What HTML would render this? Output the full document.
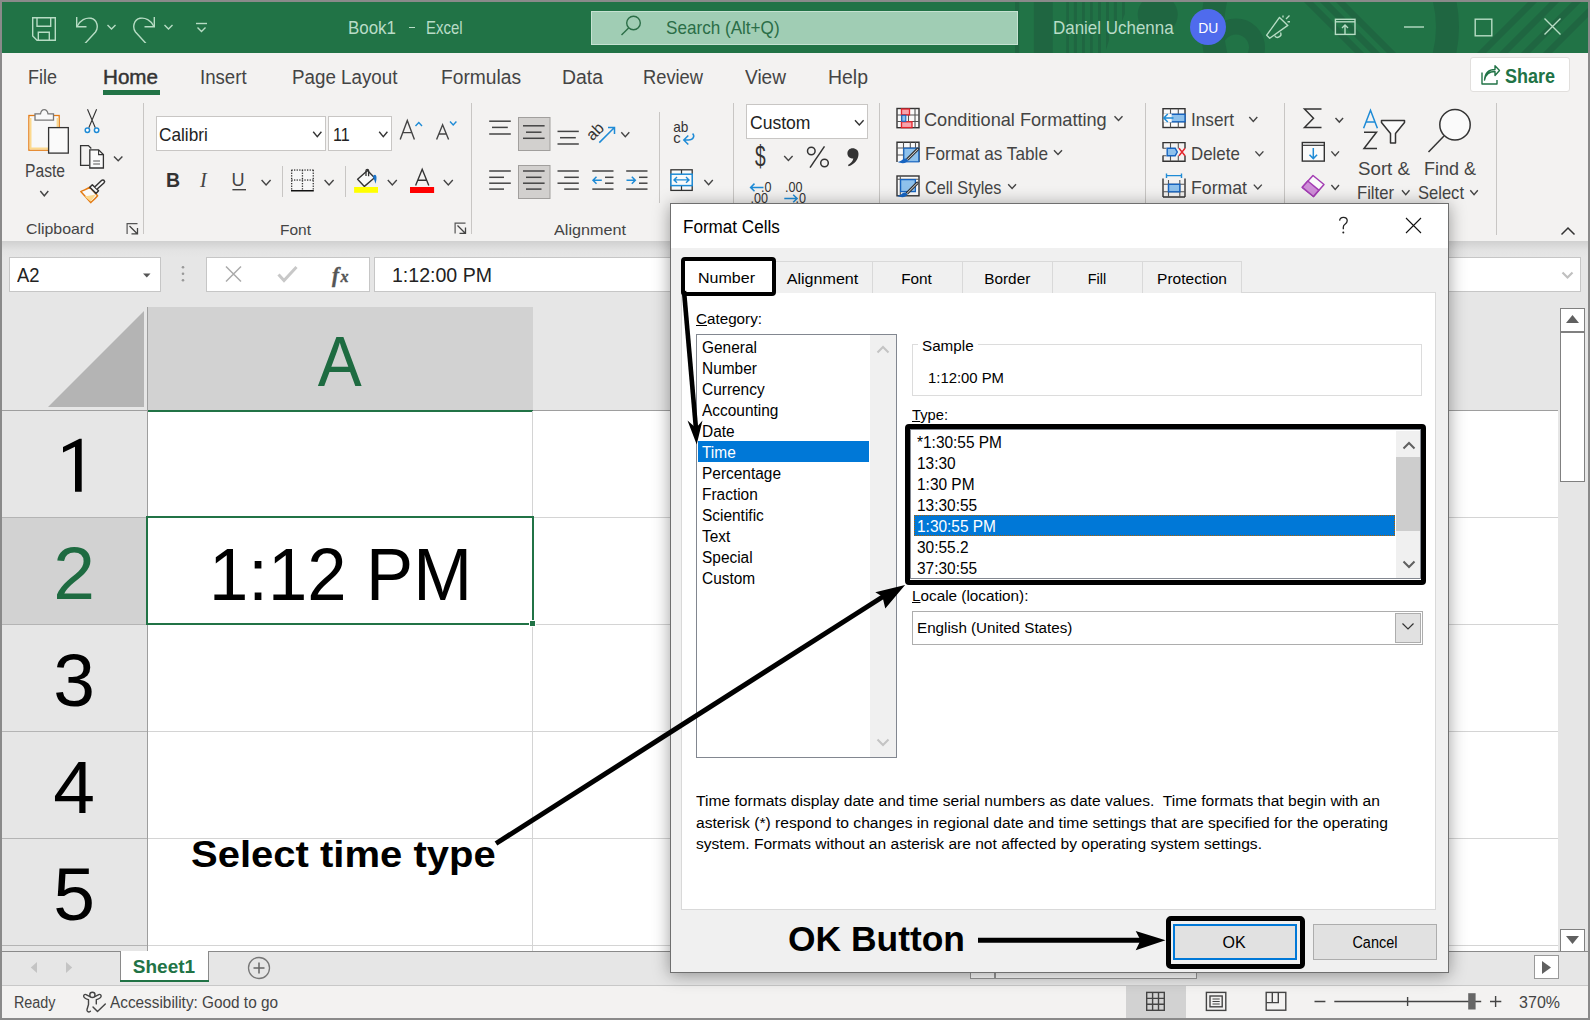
<!DOCTYPE html><html><head><meta charset="utf-8"><style>
*{margin:0;padding:0;box-sizing:border-box}
html,body{width:1590px;height:1020px;overflow:hidden;background:#8a8a8a}
body{position:relative;font-family:"Liberation Sans",sans-serif}
.a{position:absolute;display:block}
.t{position:absolute;white-space:nowrap;line-height:1}
.t span{display:inline-block}
.sl{transform-origin:0 50%}.sc{transform-origin:50% 50%}.sr{transform-origin:100% 50%}
</style></head><body>
<div class="a" style="left:2px;top:2px;width:1586px;height:1016px;background:#f3f2f1"></div>
<div class="a" style="left:2px;top:2px;width:1586px;height:51px;background:#217346;overflow:hidden"></div>
<svg class="a" style="left:1010px;top:2px;" width="578" height="51" viewBox="1010 2 578 51">
<g fill="#1f6641"><rect x="1015" y="0" width="4.2000000000000455" height="56"/><rect x="1033.9" y="0" width="18.799999999999955" height="56"/><rect x="1066.3" y="0" width="2.7000000000000455" height="56"/><rect x="1073.9" y="0" width="3.0" height="56"/><rect x="1082" y="0" width="2.7999999999999545" height="56"/><rect x="1090" y="0" width="2.7000000000000455" height="56"/><rect x="1098" y="0" width="3" height="56"/><path d="M1106 0H1109V40L1106 50Z"/><path d="M1113.9 0H1116.9V28L1113.9 36Z"/><path d="M1122 0H1124.8V14L1122 21Z"/>
<circle cx="1157.7" cy="14.6" r="20"/>
<path d="M1302 0 L1311 0 L1367 56 L1358 56Z"/><path d="M1318 0 L1327 0 L1383 56 L1374 56Z"/><path d="M1334 0 L1343 0 L1399 56 L1390 56Z"/><path d="M1474 56 L1483 56 L1539 0 L1530 0Z"/><path d="M1496 56 L1505 56 L1561 0 L1552 0Z"/><path d="M1518 56 L1527 56 L1583 0 L1574 0Z"/><path d="M1540 56 L1549 56 L1605 0 L1596 0Z"/>
</g>
<g fill="none" stroke="#1f6641">
<circle cx="1236" cy="47.4" r="21" stroke-width="16"/>
<circle cx="1330" cy="27" r="117.5" stroke-width="23"/>
</g></svg>
<div class="t" style="left:347.5px;top:18.00px;font-size:19px;color:#b9dcc7;font-weight:400;"><span id="t1" class="sl" style="transform:scaleX(0.8910)">Book1</span></div>
<div class="a" style="left:409px;top:27px;width:5.5px;height:1.4px;background:#b9dcc7"></div>
<div class="t" style="left:426px;top:18.00px;font-size:19px;color:#b9dcc7;font-weight:400;"><span id="t2" class="sl" style="transform:scaleX(0.7876)">Excel</span></div>
<div class="a" style="left:591px;top:10.5px;width:427px;height:34px;background:#a0cdb4;border:1px solid #c6e2d2"></div>
<div class="t" style="left:665.5px;top:18.00px;font-size:19px;color:#2b6e47;font-weight:400;"><span id="t3" class="sl" style="transform:scaleX(0.9002)">Search (Alt+Q)</span></div>
<div class="t" style="left:1052.9px;top:18.00px;font-size:19px;color:#b9dcc7;font-weight:400;"><span id="t4" class="sl" style="transform:scaleX(0.8920)">Daniel Uchenna</span></div>
<div class="a" style="left:1190px;top:9px;width:36px;height:36px;border-radius:50%;background:#4f6bed"></div>
<div class="t" style="left:808px;width:800px;text-align:center;top:20.00px;font-size:15.5px;color:#fff;font-weight:400;"><span id="t5" class="sc" style="transform:scaleX(0.8932)">DU</span></div>
<div class="t" style="left:28px;top:67.00px;font-size:20px;color:#444;font-weight:400;"><span id="t6" class="sl" style="transform:scaleX(0.8997)">File</span></div>
<div class="t" style="left:200.4px;top:67.00px;font-size:20px;color:#444;font-weight:400;"><span id="t7" class="sl" style="transform:scaleX(0.9314)">Insert</span></div>
<div class="t" style="left:292px;top:67.00px;font-size:20px;color:#444;font-weight:400;"><span id="t8" class="sl" style="transform:scaleX(0.9392)">Page Layout</span></div>
<div class="t" style="left:441px;top:67.00px;font-size:20px;color:#444;font-weight:400;"><span id="t9" class="sl" style="transform:scaleX(0.9597)">Formulas</span></div>
<div class="t" style="left:562px;top:67.00px;font-size:20px;color:#444;font-weight:400;"><span id="t10" class="sl" style="transform:scaleX(0.9704)">Data</span></div>
<div class="t" style="left:643px;top:67.00px;font-size:20px;color:#444;font-weight:400;"><span id="t11" class="sl" style="transform:scaleX(0.9149)">Review</span></div>
<div class="t" style="left:745px;top:67.00px;font-size:20px;color:#444;font-weight:400;"><span id="t12" class="sl" style="transform:scaleX(0.9535)">View</span></div>
<div class="t" style="left:828px;top:67.00px;font-size:20px;color:#444;font-weight:400;"><span id="t13" class="sl" style="transform:scaleX(0.9723)">Help</span></div>
<div class="t" style="left:103px;top:67.00px;font-size:20px;color:#333;font-weight:400;-webkit-text-stroke:0.45px #333"><span id="t14" class="sl" style="transform:scaleX(1.0307)">Home</span></div>
<div class="a" style="left:103px;top:90px;width:57px;height:5px;background:#217346"></div>
<div class="a" style="left:1470px;top:57px;width:100px;height:35px;background:#fff;border:1px solid #e1dfdd;border-radius:3px"></div>
<div class="t" style="left:1505px;top:66.00px;font-size:20px;color:#217346;font-weight:700;"><span id="t15" class="sl" style="transform:scaleX(0.8994)">Share</span></div>
<svg class="a" style="left:30px;top:15px;" width="28" height="28" viewBox="0 0 28 28"><g fill="none" stroke="#b7dcc4" stroke-width="1.4"><path d="M2.7 2.7H25.3V25.3H7L2.7 21Z"/><path d="M7 2.7V11.3H20.7V2.7"/><path d="M8.3 25.3V17.3H19.3V25.3"/></g></svg>
<svg class="a" style="left:74px;top:15px;" width="28" height="28" viewBox="0 0 28 28"><g fill="none" stroke="#b7dcc4" stroke-width="1.4" stroke-linejoin="miter"><path d="M2.7 2V11.8H12.5"/><path d="M3 11.5 C6 5 12 2.3 17 3.3 C23 4.5 25 12 21.5 17 L11 28.5"/></g></svg>
<svg class="a" style="left:105px;top:22px;" width="14" height="10" viewBox="0 0 14 10"><path d="M2.5 3L6.5 7L10.5 3" fill="none" stroke="#b7dcc4" stroke-width="1.4"/></svg>
<svg class="a" style="left:131px;top:15px;" width="28" height="28" viewBox="0 0 28 28"><g fill="none" stroke="#b7dcc4" stroke-width="1.4" transform="translate(26 0) scale(-1 1)"><path d="M2.7 2V11.8H12.5"/><path d="M3 11.5 C6 5 12 2.3 17 3.3 C23 4.5 25 12 21.5 17 L11 28.5"/></g></svg>
<svg class="a" style="left:162px;top:22px;" width="14" height="10" viewBox="0 0 14 10"><path d="M2.5 3L6.5 7L10.5 3" fill="none" stroke="#b7dcc4" stroke-width="1.4"/></svg>
<svg class="a" style="left:194px;top:20px;" width="16" height="16" viewBox="0 0 16 16"><g fill="none" stroke="#b7dcc4" stroke-width="1.4"><path d="M2 3.5H13"/><path d="M3.5 7.5L7.5 11.5L11.5 7.5"/></g></svg>
<svg class="a" style="left:1262px;top:12px;" width="32" height="30" viewBox="0 0 32 30"><g fill="none" stroke="#b7dcc4" stroke-width="1.4" stroke-linejoin="round"><path d="M4.7 23.2L17.5 5.4L25.8 13.4L7.7 26.2Z"/><path d="M12.6 23.5A3 3 0 0 0 18.5 20.5"/><path d="M21 3.5V5.5M24 7L27.5 3.5M25.5 9.8H28"/></g></svg>
<svg class="a" style="left:1332px;top:16px;" width="26" height="22" viewBox="0 0 26 22"><g fill="none" stroke="#b7dcc4" stroke-width="1.4"><rect x="3.4" y="3.3" width="19.6" height="15.1"/><path d="M3.4 5.8H23"/><path d="M13 18.5V9M10 12L13 9L16 12"/></g></svg>
<svg class="a" style="left:1400px;top:20px;" width="28" height="14" viewBox="0 0 28 14"><path d="M4 7H24" fill="none" stroke="#b7dcc4" stroke-width="1.4"/></svg>
<svg class="a" style="left:1470px;top:14px;" width="28" height="28" viewBox="0 0 28 28"><rect x="5.2" y="5.2" width="16.6" height="16.6" fill="none" stroke="#b7dcc4" stroke-width="1.4"/></svg>
<svg class="a" style="left:1540px;top:14px;" width="26" height="26" viewBox="0 0 26 26"><path d="M4.5 4.5L20.5 20.5M20.5 4.5L4.5 20.5" fill="none" stroke="#b7dcc4" stroke-width="1.4"/></svg>
<svg class="a" style="left:616px;top:13px;" width="30" height="28" viewBox="0 0 30 28"><g fill="none" stroke="#2b6e47" stroke-width="1.4"><circle cx="17.5" cy="10" r="6.8"/><path d="M12.6 14.9L5.5 22"/></g></svg>
<div class="a" style="left:2px;top:241px;width:1586px;height:16px;background:linear-gradient(#d0d0d0,#e3e3e3 60%,#e6e6e6)"></div>
<div class="t" style="left:26px;top:221.00px;font-size:15px;color:#444;font-weight:400;"><span id="t16" class="sl" style="transform:scaleX(1.0589)">Clipboard</span></div>
<div class="t" style="left:280px;top:222.00px;font-size:15px;color:#444;font-weight:400;"><span id="t17" class="sl" style="transform:scaleX(1.0328)">Font</span></div>
<div class="t" style="left:554px;top:222.00px;font-size:15px;color:#444;font-weight:400;"><span id="t18" class="sl" style="transform:scaleX(1.0794)">Alignment</span></div>
<div class="a" style="left:143px;top:103px;width:1px;height:131px;background:#c8c6c4"></div>
<div class="a" style="left:471px;top:103px;width:1px;height:131px;background:#c8c6c4"></div>
<div class="a" style="left:733px;top:103px;width:1px;height:131px;background:#c8c6c4"></div>
<div class="a" style="left:879px;top:103px;width:1px;height:131px;background:#c8c6c4"></div>
<div class="a" style="left:1145px;top:103px;width:1px;height:131px;background:#c8c6c4"></div>
<div class="a" style="left:1284px;top:103px;width:1px;height:131px;background:#c8c6c4"></div>
<div class="a" style="left:1496px;top:103px;width:1px;height:132px;background:#c8c6c4"></div>
<div class="a" style="left:282px;top:166px;width:1px;height:31px;background:#c8c6c4"></div>
<div class="a" style="left:345px;top:166px;width:1px;height:31px;background:#c8c6c4"></div>
<div class="a" style="left:659px;top:112px;width:1px;height:91px;background:#c8c6c4"></div>
<div class="t" style="left:25px;top:162.00px;font-size:18px;color:#444;font-weight:400;"><span id="t19" class="sl" style="transform:scaleX(0.8690)">Paste</span></div>
<div class="a" style="left:156px;top:116px;width:170px;height:35px;background:#fff;border:1px solid #c8c6c4"></div>
<div class="t" style="left:159.2px;top:125.00px;font-size:19px;color:#222;font-weight:400;"><span id="t20" class="sl" style="transform:scaleX(0.9061)">Calibri</span></div>
<div class="a" style="left:328px;top:116px;width:64px;height:35px;background:#fff;border:1px solid #c8c6c4"></div>
<div class="t" style="left:332.5px;top:125.00px;font-size:19px;color:#222;font-weight:400;"><span id="t21" class="sl" style="transform:scaleX(0.8462)">11</span></div>
<div class="a" style="left:746px;top:104px;width:122px;height:35px;background:#fff;border:1px solid #c8c6c4"></div>
<div class="t" style="left:749.5px;top:114.00px;font-size:18px;color:#222;font-weight:400;"><span id="t22" class="sl" style="transform:scaleX(0.9756)">Custom</span></div>
<div class="t" style="left:924px;top:110.00px;font-size:19px;color:#444;font-weight:400;"><span id="t23" class="sl" style="transform:scaleX(0.9558)">Conditional Formatting</span></div>
<div class="t" style="left:925px;top:144.00px;font-size:19px;color:#444;font-weight:400;"><span id="t24" class="sl" style="transform:scaleX(0.9051)">Format as Table</span></div>
<div class="t" style="left:925px;top:178.00px;font-size:19px;color:#444;font-weight:400;"><span id="t25" class="sl" style="transform:scaleX(0.8513)">Cell Styles</span></div>
<div class="t" style="left:1191px;top:110.00px;font-size:19px;color:#444;font-weight:400;"><span id="t26" class="sl" style="transform:scaleX(0.9047)">Insert</span></div>
<div class="t" style="left:1191px;top:144.00px;font-size:19px;color:#444;font-weight:400;"><span id="t27" class="sl" style="transform:scaleX(0.8885)">Delete</span></div>
<div class="t" style="left:1191px;top:178.00px;font-size:19px;color:#444;font-weight:400;"><span id="t28" class="sl" style="transform:scaleX(0.9304)">Format</span></div>
<div class="t" style="left:1358px;top:159.00px;font-size:19px;color:#444;font-weight:400;"><span id="t29" class="sl" style="transform:scaleX(0.9846)">Sort &amp;</span></div>
<div class="t" style="left:1357px;top:183.00px;font-size:19px;color:#444;font-weight:400;"><span id="t30" class="sl" style="transform:scaleX(0.8761)">Filter</span></div>
<div class="t" style="left:1424px;top:159.00px;font-size:19px;color:#444;font-weight:400;"><span id="t31" class="sl" style="transform:scaleX(0.9468)">Find &amp;</span></div>
<div class="t" style="left:1418px;top:183.00px;font-size:19px;color:#444;font-weight:400;"><span id="t32" class="sl" style="transform:scaleX(0.8710)">Select</span></div>
<svg class="a" style="left:20px;top:104px;" width="115" height="135" viewBox="20 104 115 135">
<rect x="28.9" y="115.5" width="30.3" height="34.7" fill="#f8f8f8" stroke="#e37b14" stroke-width="1.3"/>
<path d="M30.5 118V148.5H48M57.6 118V127" fill="none" stroke="#fcd98e" stroke-width="2"/>
<path d="M35 113.9H40.5C41 111 42.5 109.6 44.2 109.6C46 109.6 47.5 111 48 113.9H53.5V120.2H35Z" fill="#f8f8f8" stroke="#777" stroke-width="1.3"/>
<rect x="48.6" y="127.6" width="19.7" height="25.5" fill="#fafafa" stroke="#333" stroke-width="1.3"/>
<path d="M40.3 191L44.3 195.8L48.3 191" fill="none" stroke="#444" stroke-width="1.4"/>
<path d="M87.5 109.2L95.3 127.8M96.6 109.2L88.8 127.8" stroke="#333" stroke-width="1.1"/>
<circle cx="87.4" cy="130.2" r="2.2" fill="#fff" stroke="#1e8bd6" stroke-width="1.5"/>
<circle cx="96.6" cy="130.2" r="2.2" fill="#fff" stroke="#1e8bd6" stroke-width="1.5"/>
<path d="M89.4 165.3H80.6V145.6H88.4L91.3 148.5" fill="none" stroke="#333" stroke-width="1.3"/>
<path d="M89.8 168H103.4V154.6L98.6 149.9H89.8Z" fill="#fafafa" stroke="#333" stroke-width="1.3"/>
<path d="M98.6 149.9V154.6H103.4" fill="none" stroke="#333" stroke-width="1.1"/>
<path d="M93.2 161H100M93.2 164H100" stroke="#555" stroke-width="1"/>
<path d="M114 156.5L118.2 160.8L122.4 156.5" fill="none" stroke="#444" stroke-width="1.4"/>
<path d="M80.8 191.6C84 190 87 189.2 89.8 187.2L97.6 195.8C95.5 198.5 93 200.5 90.7 202.6Z" fill="#fafafa" stroke="#e37b14" stroke-width="1.5" stroke-linejoin="round"/>
<path d="M84.5 196.5L96 194.6L90.7 201.5Z" fill="#fcd98e"/>
<path d="M89.8 187.2L92.3 184.8L98.5 190.8L96 193.4Z" fill="#fafafa" stroke="#333" stroke-width="1.5" stroke-linejoin="round"/>
<path d="M95 186.8L101.5 180.5C102.3 179.7 103.6 179.7 104.1 180.5C104.7 181.2 104.6 182.4 103.9 183L97.2 189" fill="#fafafa" stroke="#333" stroke-width="1.5" stroke-linejoin="round"/>
</svg>
<svg class="a" style="left:120px;top:218px;" width="360" height="20" viewBox="120 218 360 20"><path d="M127.1 234V223.6H137.5" fill="none" stroke="#555" stroke-width="1.2"/><path d="M129.5 226L137.0 233.5M131.5 233.8H137.5V228" fill="none" stroke="#444" stroke-width="1.3"/><path d="M455.1 233.5V223.1H465.5" fill="none" stroke="#555" stroke-width="1.2"/><path d="M457.5 225.5L465.0 233.0M459.5 233.3H465.5V227.5" fill="none" stroke="#444" stroke-width="1.3"/></svg>
<svg class="a" style="left:150px;top:110px;" width="320" height="90" viewBox="150 110 320 90">
<path d="M313.2 131.8L317.3 136.60000000000002L321.4 131.8" fill="none" stroke="#333" stroke-width="1.4"/>
<path d="M379.2 131.8L383.3 136.60000000000002L387.4 131.8" fill="none" stroke="#333" stroke-width="1.4"/>
<path d="M400.2 139.6L407.3 120.5L414.4 139.6M402.8 132.6H411.8" fill="none" stroke="#444" stroke-width="1.4"/>
<path d="M415.5 126L418.8 122.5L422 126" fill="none" stroke="#1e8bd6" stroke-width="1.4"/>
<path d="M436.6 139.6L442.6 124.8L448.6 139.6M438.8 134H446.4" fill="none" stroke="#444" stroke-width="1.4"/>
<path d="M450 121.5L453.2 125L456.4 121.5" fill="none" stroke="#1e8bd6" stroke-width="1.4"/>
<text x="166" y="186.8" font-family="Liberation Sans" font-weight="700" font-size="19.5" fill="#333">B</text>
<text x="200" y="186.8" font-family="Liberation Serif" font-style="italic" font-size="20" fill="#444">I</text>
<text x="231.5" y="186.5" font-family="Liberation Sans" font-size="19" fill="#444" transform="translate(231.5 0) scale(0.95 1) translate(-231.5 0)">U</text>
<rect x="232.4" y="189" width="13.6" height="1.4" fill="#444"/>
<path d="M261.6 180L266.1 185L270.6 180" fill="none" stroke="#444" stroke-width="1.4"/>
<rect x="291.6" y="170" width="21.6" height="19.8" fill="#f7f7f7"/>
<rect x="291.4" y="169.4" width="1.3" height="1.3" fill="#333"/><rect x="294.0" y="169.4" width="1.3" height="1.3" fill="#333"/><rect x="296.6" y="169.4" width="1.3" height="1.3" fill="#333"/><rect x="299.2" y="169.4" width="1.3" height="1.3" fill="#333"/><rect x="301.8" y="169.4" width="1.3" height="1.3" fill="#333"/><rect x="304.4" y="169.4" width="1.3" height="1.3" fill="#333"/><rect x="307.0" y="169.4" width="1.3" height="1.3" fill="#333"/><rect x="309.6" y="169.4" width="1.3" height="1.3" fill="#333"/><rect x="312.2" y="169.4" width="1.3" height="1.3" fill="#333"/><rect x="291.0" y="170.0" width="1.3" height="1.3" fill="#333"/><rect x="291.0" y="172.6" width="1.3" height="1.3" fill="#333"/><rect x="291.0" y="175.2" width="1.3" height="1.3" fill="#333"/><rect x="291.0" y="177.8" width="1.3" height="1.3" fill="#333"/><rect x="291.0" y="180.4" width="1.3" height="1.3" fill="#333"/><rect x="291.0" y="183.0" width="1.3" height="1.3" fill="#333"/><rect x="291.0" y="185.6" width="1.3" height="1.3" fill="#333"/><rect x="291.0" y="188.2" width="1.3" height="1.3" fill="#333"/><rect x="312.59999999999997" y="170.0" width="1.3" height="1.3" fill="#333"/><rect x="312.59999999999997" y="172.6" width="1.3" height="1.3" fill="#333"/><rect x="312.59999999999997" y="175.2" width="1.3" height="1.3" fill="#333"/><rect x="312.59999999999997" y="177.8" width="1.3" height="1.3" fill="#333"/><rect x="312.59999999999997" y="180.4" width="1.3" height="1.3" fill="#333"/><rect x="312.59999999999997" y="183.0" width="1.3" height="1.3" fill="#333"/><rect x="312.59999999999997" y="185.6" width="1.3" height="1.3" fill="#333"/><rect x="312.59999999999997" y="188.2" width="1.3" height="1.3" fill="#333"/>
<rect x="291.4" y="179.4" width="1.3" height="1.3" fill="#333"/><rect x="294.0" y="179.4" width="1.3" height="1.3" fill="#333"/><rect x="296.6" y="179.4" width="1.3" height="1.3" fill="#333"/><rect x="299.2" y="179.4" width="1.3" height="1.3" fill="#333"/><rect x="301.8" y="179.4" width="1.3" height="1.3" fill="#333"/><rect x="304.4" y="179.4" width="1.3" height="1.3" fill="#333"/><rect x="307.0" y="179.4" width="1.3" height="1.3" fill="#333"/><rect x="309.6" y="179.4" width="1.3" height="1.3" fill="#333"/><rect x="312.2" y="179.4" width="1.3" height="1.3" fill="#333"/><rect x="301.79999999999995" y="170.0" width="1.3" height="1.3" fill="#333"/><rect x="301.79999999999995" y="172.6" width="1.3" height="1.3" fill="#333"/><rect x="301.79999999999995" y="175.2" width="1.3" height="1.3" fill="#333"/><rect x="301.79999999999995" y="177.8" width="1.3" height="1.3" fill="#333"/><rect x="301.79999999999995" y="180.4" width="1.3" height="1.3" fill="#333"/><rect x="301.79999999999995" y="183.0" width="1.3" height="1.3" fill="#333"/><rect x="301.79999999999995" y="185.6" width="1.3" height="1.3" fill="#333"/><rect x="301.79999999999995" y="188.2" width="1.3" height="1.3" fill="#333"/>
<rect x="291" y="190" width="22.8" height="1.5" fill="#111"/>
<path d="M324.6 180L329.1 185L333.6 180" fill="none" stroke="#444" stroke-width="1.4"/>
<path d="M357.6 179.3L367.5 170.5L374.5 177.8L364.4 186.4Z" fill="#fafafa" stroke="#333" stroke-width="1.4" stroke-linejoin="round"/>
<path d="M366 176V170.6C366 169 368.6 169 368.6 170.6V176.3" fill="none" stroke="#333" stroke-width="1.3"/>
<path d="M373.5 175.6C375 174 376.4 175 376.5 177.5C376.6 180 376 182 375.3 183.8C374.8 181 374.2 179 373 177.5Z" fill="#1a73c9"/>
<rect x="354.1" y="187" width="23.9" height="5.8" fill="#ffff00"/>
<path d="M387.8 180L392.3 185L396.8 180" fill="none" stroke="#444" stroke-width="1.4"/>
<path d="M415.6 185.5L422.2 169.3L428.8 185.5M417.9 180.3H426.5" fill="none" stroke="#333" stroke-width="1.4"/>
<rect x="410" y="187" width="24.1" height="6" fill="#ff0000"/>
<path d="M443.8 180L448.3 185L452.8 180" fill="none" stroke="#444" stroke-width="1.4"/>
</svg>
<svg class="a" style="left:480px;top:110px;" width="250" height="95" viewBox="480 110 250 95">
<path d="M489.2 121.2H510.8" stroke="#444" stroke-width="1.5"/><path d="M492 127.4H507.8" stroke="#444" stroke-width="1.5"/><path d="M489.2 134H510.8" stroke="#444" stroke-width="1.5"/>
<rect x="518.5" y="117.5" width="31.5" height="33" fill="#d2d0ce" stroke="#a19f9d" stroke-width="1"/>
<path d="M523 125.8H544.6" stroke="#444" stroke-width="1.5"/><path d="M526 132.2H541.5" stroke="#444" stroke-width="1.5"/><path d="M523 138.3H544.6" stroke="#444" stroke-width="1.5"/>
<path d="M557.5 131.4H578.8" stroke="#444" stroke-width="1.5"/><path d="M560 137.7H575.8" stroke="#444" stroke-width="1.5"/><path d="M557.5 144H578.8" stroke="#444" stroke-width="1.5"/>
<text x="0" y="0" font-family="Liberation Sans" font-size="16" fill="#333" transform="translate(592.5 141.5) rotate(-45)">ab</text>
<path d="M599.3 142.6L614.2 127.7M608 127.5H614.5V134" fill="none" stroke="#1e8bd6" stroke-width="1.5"/>
<path d="M621.3 132.2L625.3 136.6L629.3 132.2" fill="none" stroke="#444" stroke-width="1.4"/>
<text x="673.3" y="132.3" font-family="Liberation Sans" font-size="14.8" fill="#333" transform="translate(673.3 0) scale(0.92 1) translate(-673.3 0)">ab</text>
<text x="673.3" y="143.3" font-family="Liberation Sans" font-size="14.8" fill="#333">c</text>
<path d="M692.6 133.4C695 136 693.5 140 688.5 140H684M688.3 135.5L683.8 140L688.3 144.5" fill="none" stroke="#1e8bd6" stroke-width="1.5"/>
<path d="M489.2 171H510.8" stroke="#444" stroke-width="1.5"/><path d="M489.2 177.3H504" stroke="#444" stroke-width="1.5"/><path d="M489.2 183.2H510.8" stroke="#444" stroke-width="1.5"/><path d="M489.2 189.1H504" stroke="#444" stroke-width="1.5"/>
<rect x="518.5" y="165.5" width="31.5" height="33" fill="#d2d0ce" stroke="#a19f9d" stroke-width="1"/>
<path d="M523 171H544.6" stroke="#444" stroke-width="1.5"/><path d="M526 177.3H541.5" stroke="#444" stroke-width="1.5"/><path d="M523 183.2H544.6" stroke="#444" stroke-width="1.5"/><path d="M526 189.1H541.5" stroke="#444" stroke-width="1.5"/>
<path d="M557.5 171H578.8" stroke="#444" stroke-width="1.5"/><path d="M564.2 177.3H578.8" stroke="#444" stroke-width="1.5"/><path d="M557.5 183.2H578.8" stroke="#444" stroke-width="1.5"/><path d="M564.2 189.1H578.8" stroke="#444" stroke-width="1.5"/>
<path d="M592.3 171H613.5" stroke="#444" stroke-width="1.5"/><path d="M605 177.3H613.5" stroke="#444" stroke-width="1.5"/><path d="M605 183.2H613.5" stroke="#444" stroke-width="1.5"/><path d="M592.3 189.1H613.5" stroke="#444" stroke-width="1.5"/>
<path d="M601.8 180.2H593M596.5 176.7L593 180.2L596.5 183.7" fill="none" stroke="#1e8bd6" stroke-width="1.5"/>
<path d="M626.2 171H647.5" stroke="#444" stroke-width="1.5"/><path d="M639 177.3H647.5" stroke="#444" stroke-width="1.5"/><path d="M639 183.2H647.5" stroke="#444" stroke-width="1.5"/><path d="M626.2 189.1H647.5" stroke="#444" stroke-width="1.5"/>
<path d="M626.5 180.2H635.3M631.8 176.7L635.3 180.2L631.8 183.7" fill="none" stroke="#1e8bd6" stroke-width="1.5"/>
<rect x="670.9" y="169.8" width="21.3" height="20.6" fill="#fafafa" stroke="#333" stroke-width="1.3"/>
<path d="M681.5 170V174M681.5 186V190.4" stroke="#333" stroke-width="1.2"/>
<rect x="670.9" y="174.2" width="21.3" height="11.4" fill="#fafafa" stroke="#1e8bd6" stroke-width="1.5"/>
<path d="M674 179.9H689M677 177L674 179.9L677 182.8M686 177L689 179.9L686 182.8" fill="none" stroke="#1e8bd6" stroke-width="1.4"/>
<path d="M704.4 180L708.6 184.8L712.8 180" fill="none" stroke="#444" stroke-width="1.4"/>
</svg>
<svg class="a" style="left:740px;top:100px;" width="140" height="108" viewBox="740 100 140 108">
<path d="M855 120.2L859.3 125.0L863.6 120.2" fill="none" stroke="#333" stroke-width="1.4"/>
<text x="755" y="166.3" font-family="Liberation Sans" font-size="29" fill="#333" transform="translate(755 0) scale(0.66 1) translate(-755 0)">$</text>
<path d="M784.2 156L788.4000000000001 160.4L792.6 156" fill="none" stroke="#444" stroke-width="1.4"/>
<circle cx="811.3" cy="151" r="3.8" fill="none" stroke="#333" stroke-width="1.5"/>
<circle cx="824.5" cy="163" r="3.8" fill="none" stroke="#333" stroke-width="1.5"/>
<path d="M810 167.7L824.5 146.3" stroke="#333" stroke-width="1.5"/>
<path d="M852.6 148.3C856 148.3 858.5 150.5 858.5 154C858.5 159.5 854.5 164.3 848.6 166.3L848 165C851 163.3 853 161 853.3 158.6C850 158.5 847.4 156.5 847.4 153.4C847.4 150.5 849.6 148.3 852.6 148.3Z" fill="#333"/>
<path d="M763.5 187.4H750.8M754.5 183.6L750.6 187.4L754.5 191.2" fill="none" stroke="#1e8bd6" stroke-width="1.5"/>
<text x="761" y="191.6" font-family="Liberation Sans" font-size="14" fill="#333" transform="translate(761 0) scale(0.9 1) translate(-761 0)">.0</text>
<text x="750.5" y="203.2" font-family="Liberation Sans" font-size="14" fill="#333" transform="translate(750.5 0) scale(0.9 1) translate(-750.5 0)">.00</text>
<text x="785" y="191.6" font-family="Liberation Sans" font-size="14" fill="#333" transform="translate(785 0) scale(0.9 1) translate(-785 0)">.00</text>
<path d="M784.3 198.5H797M793.2 194.7L797.1 198.5L793.2 202.3" fill="none" stroke="#1e8bd6" stroke-width="1.5"/>
<text x="795.5" y="203.2" font-family="Liberation Sans" font-size="14" fill="#333" transform="translate(795.5 0) scale(0.9 1) translate(-795.5 0)">.0</text>
</svg>
<svg class="a" style="left:890px;top:100px;" width="240" height="100" viewBox="890 100 240 100">
<rect x="897" y="108.5" width="22" height="19.2" fill="#fafafa" stroke="#333" stroke-width="1.4"/>
<path d="M901.5 108.5V127.7M908.5 108.5V127.7M915 108.5V127.7M897 115H919M897 121.5H919" stroke="#555" stroke-width="1.1"/>
<rect x="901.5" y="109" width="8" height="5.8" fill="#f7a3ab" stroke="#e3242b" stroke-width="1.3"/>
<rect x="901.5" y="121.8" width="10.5" height="5.8" fill="#f7a3ab" stroke="#e3242b" stroke-width="1.3"/>
<rect x="901.8" y="115.3" width="4" height="6" fill="#8ec1ec" stroke="#1764c0" stroke-width="1.1"/>
<path d="M1114.5 116.2L1118.5 120.5L1122.5 116.2" fill="none" stroke="#444" stroke-width="1.4"/>
<path d="M897 162V142.3H919V162" fill="#fafafa" stroke="#333" stroke-width="1.4"/>
<path d="M903.5 142.3V162M910.3 142.3V148M915.5 142.3V148M897 148H919M897 155H903" stroke="#555" stroke-width="1.1"/>
<rect x="903.8" y="148.2" width="15" height="13.6" fill="#8ec1ec" stroke="#1764c0" stroke-width="1.2"/>
<path d="M906.5 159L917.0 148.5C918.0 147.5 919.3 148.7 918.3 149.8L908.0 160.2" fill="#fafafa" stroke="#333" stroke-width="1.2"/><path d="M897.5 161.8C901.5 162 903.5 157 906.5 158.8L908.1 160.3C907.0 163 902.5 164.5 897.5 161.8Z" fill="#1764c0"/>
<path d="M1054 150.2L1058.0 154.5L1062 150.2" fill="none" stroke="#444" stroke-width="1.4"/>
<rect x="897" y="176" width="22" height="19.8" fill="#fafafa" stroke="#333" stroke-width="1.4"/>
<path d="M900.3 176V195.8M897 179.3H919" stroke="#555" stroke-width="1.1"/>
<rect x="900.6" y="179.6" width="14.8" height="12" fill="#8ec1ec" stroke="#1764c0" stroke-width="1.3"/>
<path d="M906 193L916.5 182.5C917.5 181.5 918.8 182.7 917.8 183.8L907.5 194.2" fill="#fafafa" stroke="#333" stroke-width="1.2"/><path d="M897 195.8C901 196 903 191 906 192.8L907.6 194.3C906.5 197 902 198.5 897 195.8Z" fill="#1764c0"/>
<path d="M1008.2 184.2L1012.1 188.39999999999998L1016.0 184.2" fill="none" stroke="#444" stroke-width="1.4"/>
</svg>
<svg class="a" style="left:1155px;top:100px;" width="115" height="100" viewBox="1155 100 115 100">
<rect x="1163" y="108.7" width="22" height="18.8" fill="#fafafa" stroke="#333" stroke-width="1.4"/>
<path d="M1170.5 108.7V127.5M1178.3 108.7V127.5M1163 114.3H1185M1163 121.8H1185" stroke="#555" stroke-width="1.1"/>
<rect x="1170.5" y="114.3" width="14.5" height="7.5" fill="#8ec1ec" stroke="#1764c0" stroke-width="1.4"/>
<rect x="1163.7" y="113.8" width="8" height="8.5" fill="#fafafa"/>
<path d="M1173.5 118H1164M1167.8 114L1163.8 118L1167.8 122" fill="none" stroke="#1e8bd6" stroke-width="1.5"/>
<path d="M1249.3 117L1253.3 121.4L1257.3 117" fill="none" stroke="#444" stroke-width="1.4"/>
<path d="M1163 148.5V142.6H1185V148.5M1163 155.5V161.3H1185V155.5" fill="none" stroke="#333" stroke-width="1.4"/>
<path d="M1170.5 142.6V148.5M1178.3 142.6V148.5M1170.5 155.5V161.3M1178.3 155.5V161.3M1163 148.3H1166.5M1163 155.7H1166.5" stroke="#555" stroke-width="1.1"/>
<path d="M1167.2 148.3H1175.2L1177.3 152L1175.2 155.7H1167.2Z" fill="#8ec1ec" stroke="#1764c0" stroke-width="1.4"/>
<path d="M1179 148.3L1185 155.8M1185 148.3L1179 155.8" stroke="#e3242b" stroke-width="1.5"/>
<path d="M1255.4 151.4L1259.4 155.8L1263.4 151.4" fill="none" stroke="#444" stroke-width="1.4"/>
<path d="M1166.5 175.6H1181.5M1166.5 173.4V178M1181.5 173.4V178" stroke="#1e8bd6" stroke-width="1.4"/>
<path d="M1163 197V178.5M1185 178.5V197M1163 197H1185" fill="none" stroke="#333" stroke-width="1.4"/>
<path d="M1168.5 180V197M1179.8 180V197M1163 184.3H1185M1163 191.8H1185" stroke="#555" stroke-width="1.1"/>
<rect x="1168.5" y="184.3" width="11.3" height="7.5" fill="#8ec1ec" stroke="#1764c0" stroke-width="1.4"/>
<path d="M1253.8 184.6L1257.8 189.0L1261.8 184.6" fill="none" stroke="#444" stroke-width="1.4"/>
</svg>
<svg class="a" style="left:1295px;top:100px;" width="200" height="105" viewBox="1295 100 200 105">
<path d="M1321.5 109H1304.5L1313.5 118.3L1304.5 127.6H1321.5" fill="none" stroke="#333" stroke-width="1.5"/>
<path d="M1335.5 118L1339.3 122.1L1343.1 118" fill="none" stroke="#444" stroke-width="1.4"/>
<rect x="1302.3" y="142.5" width="22" height="18.6" fill="#fafafa" stroke="#333" stroke-width="1.4"/>
<path d="M1302.3 145.3H1324.3" stroke="#333" stroke-width="1.2"/>
<path d="M1313.3 148V158.6M1309.5 154.8L1313.3 158.6L1317.1 154.8" fill="none" stroke="#1e8bd6" stroke-width="1.5"/>
<path d="M1331.4 151.4L1335.2 155.8L1339.0 151.4" fill="none" stroke="#444" stroke-width="1.4"/>
<path d="M1313 175.5L1324 184.5L1313.5 196.5L1302.3 187.3Z" fill="#fafafa" stroke="#a33db3" stroke-width="1.5" stroke-linejoin="round"/>
<path d="M1302.3 187.3L1307.8 181L1318.8 190.2L1313.5 196.5Z" fill="#cf8fd8" stroke="#a33db3" stroke-width="1.5" stroke-linejoin="round"/>
<path d="M1331.4 185L1335.2 189.4L1339.0 185" fill="none" stroke="#444" stroke-width="1.4"/>
<path d="M1363.6 128.3L1370.5 110.3L1377.4 128.3M1366 122H1375" fill="none" stroke="#1e8bd6" stroke-width="1.5"/>
<path d="M1364 132.3H1376.5L1364 148.5H1377" fill="none" stroke="#333" stroke-width="1.5"/>
<path d="M1381.5 120.5H1404.5V122.6L1395.5 133.5V143H1390.5V133.5L1381.5 122.6Z" fill="#fafafa" stroke="#333" stroke-width="1.5" stroke-linejoin="round"/>
<path d="M1402 190.3L1405.75 194.60000000000002L1409.5 190.3" fill="none" stroke="#444" stroke-width="1.4"/>
<circle cx="1455" cy="124.8" r="15.2" fill="#fafafa" stroke="#333" stroke-width="1.5"/>
<path d="M1444 136L1428.5 152" stroke="#333" stroke-width="1.5"/>
<path d="M1470.3 190.3L1474.05 194.60000000000002L1477.8 190.3" fill="none" stroke="#444" stroke-width="1.4"/>
</svg>
<svg class="a" style="left:1475px;top:60px;" width="30" height="30" viewBox="1475 60 30 30"><path d="M1482 72.5V84H1497V80M1484.5 80C1485.5 75 1489 71.5 1495 71.5V75.5L1499.5 70.5L1495 65.8V69.5C1488 69.5 1485 74 1484.5 80Z" fill="none" stroke="#217346" stroke-width="1.4" stroke-linejoin="round"/></svg>
<svg class="a" style="left:1555px;top:222px;" width="25" height="16" viewBox="1555 222 25 16"><path d="M1561.5 234.5L1568 228L1574.5 234.5" fill="none" stroke="#333" stroke-width="1.5"/></svg>
<div class="a" style="left:2px;top:257px;width:1586px;height:50px;background:#e6e6e6"></div>
<div class="a" style="left:9px;top:257px;width:152px;height:35px;background:#fff;border:1px solid #c6c6c6"></div>
<div class="t" style="left:16.5px;top:265.00px;font-size:20px;color:#222;font-weight:400;"><span id="t33" class="sl" style="transform:scaleX(0.9195)">A2</span></div>
<div class="a" style="left:206px;top:257px;width:164px;height:35px;background:#fff;border:1px solid #c6c6c6"></div>
<div class="a" style="left:374px;top:257px;width:1207px;height:35px;background:#fff;border:1px solid #c6c6c6"></div>
<div class="t" style="left:392px;top:265.00px;font-size:20px;color:#222;font-weight:400;"><span id="t34" class="sl" style="transform:scaleX(0.9775)">1:12:00 PM</span></div>
<div class="a" style="left:2px;top:307px;width:1556px;height:103px;background:#e6e6e6"></div>
<div class="a" style="left:147px;top:307px;width:386px;height:103px;background:#d2d2d2"></div>
<div class="a" style="left:2px;top:410px;width:145px;height:541px;background:#e6e6e6"></div>
<div class="a" style="left:2px;top:517px;width:145px;height:107px;background:#d2d2d2"></div>
<div class="a" style="left:148px;top:411px;width:1410px;height:540px;background:#fff"></div>
<div class="a" style="left:2px;top:410px;width:1556px;height:1px;background:#9e9e9e"></div>
<div class="a" style="left:147px;top:410px;width:386px;height:2px;background:#217346"></div>
<div class="a" style="left:147px;top:307px;width:1px;height:644px;background:#9e9e9e"></div>
<div class="a" style="left:2px;top:517px;width:145px;height:1px;background:#b4b4b4"></div>
<div class="a" style="left:148px;top:517px;width:1410px;height:1px;background:#d4d4d4"></div>
<div class="a" style="left:2px;top:624px;width:145px;height:1px;background:#b4b4b4"></div>
<div class="a" style="left:148px;top:624px;width:1410px;height:1px;background:#d4d4d4"></div>
<div class="a" style="left:2px;top:731px;width:145px;height:1px;background:#b4b4b4"></div>
<div class="a" style="left:148px;top:731px;width:1410px;height:1px;background:#d4d4d4"></div>
<div class="a" style="left:2px;top:838px;width:145px;height:1px;background:#b4b4b4"></div>
<div class="a" style="left:148px;top:838px;width:1410px;height:1px;background:#d4d4d4"></div>
<div class="a" style="left:2px;top:945px;width:145px;height:1px;background:#b4b4b4"></div>
<div class="a" style="left:148px;top:945px;width:1410px;height:1px;background:#d4d4d4"></div>
<div class="a" style="left:532px;top:411px;width:1px;height:540px;background:#d4d4d4"></div>
<svg class="a" style="left:48px;top:311px;" width="97" height="96" viewBox="0 0 97 96"><path d="M96 0 L96 96 L0 96 Z" fill="#b4b4b4"/></svg>
<div class="t" style="left:-60px;width:800px;text-align:center;top:326.00px;font-size:71px;color:#1e6b41;font-weight:400;"><span id="t35" class="sc" style="transform:scaleX(0.9291)">A</span></div>
<svg class="a" style="left:55px;top:430px;" width="40" height="70" viewBox="55 430 40 70"><path d="M63 447.1L79.5 438.8H81.7V491.7H75V446.8L63 452.6Z" fill="#000"/></svg>
<div class="t" style="left:-326px;width:800px;text-align:center;top:536.00px;font-size:75px;color:#1e6b41;font-weight:400;"><span id="t36" class="sc" >2</span></div>
<div class="t" style="left:-326px;width:800px;text-align:center;top:643.00px;font-size:75px;color:#000;font-weight:400;"><span id="t37" class="sc" >3</span></div>
<div class="t" style="left:-326px;width:800px;text-align:center;top:750.00px;font-size:75px;color:#000;font-weight:400;"><span id="t38" class="sc" >4</span></div>
<div class="t" style="left:-326px;width:800px;text-align:center;top:857.00px;font-size:75px;color:#000;font-weight:400;"><span id="t39" class="sc" >5</span></div>
<div class="a" style="left:146px;top:516px;width:388px;height:109px;border:2px solid #217346"></div>
<div class="a" style="left:529px;top:620px;width:7px;height:7px;background:#217346;border:1px solid #fff"></div>
<div class="t" style="left:208.9px;top:538.00px;font-size:74px;color:#000;font-weight:400;"><span id="t40" class="sl" style="transform:scaleX(0.9543)">1:12 PM</span></div>
<div class="a" style="left:1558px;top:307px;width:30px;height:644px;background:#e6e6e6"></div>
<div class="a" style="left:1560px;top:308px;width:25px;height:24px;background:#fff;border:1px solid #808080"></div>
<div class="a" style="left:1560px;top:332px;width:25px;height:150px;background:#fff;border:1px solid #808080"></div>
<div class="a" style="left:1560px;top:929px;width:25px;height:23px;background:#fff;border:1px solid #808080"></div>
<svg class="a" style="left:1566px;top:315px;" width="13" height="8" viewBox="0 0 13 8"><path d="M6.5 0 L13 8 L0 8Z" fill="#606060"/></svg>
<svg class="a" style="left:1566px;top:936px;" width="13" height="8" viewBox="0 0 13 8"><path d="M0 0 L13 0 L6.5 8Z" fill="#606060"/></svg>
<div class="a" style="left:2px;top:951px;width:1586px;height:35px;background:#e6e6e6;border-top:1px solid #8a8a8a;border-bottom:1px solid #c8c8c8"></div>
<div class="a" style="left:120px;top:951px;width:89px;height:30px;background:#fff;border:1px solid #8a8a8a;border-top:none;border-bottom:none"></div>
<div class="a" style="left:120px;top:980px;width:89px;height:2px;background:#217346"></div>
<div class="t" style="left:132.8px;top:957.00px;font-size:19px;color:#217346;font-weight:700;"><span id="t41" class="sl" >Sheet1</span></div>
<svg class="a" style="left:28px;top:960px;" width="50" height="16" viewBox="0 0 50 16"><path d="M9 2 L2.8 7.5 L9 13Z" fill="#c4c4c4"/><path d="M38 2 L44.2 7.5 L38 13Z" fill="#c4c4c4"/></svg>
<svg class="a" style="left:247px;top:956px;" width="24" height="24" viewBox="0 0 24 24"><circle cx="12" cy="12" r="10.5" fill="none" stroke="#777" stroke-width="1.3"/><path d="M12 6.5V17.5M6.5 12H17.5" stroke="#666" stroke-width="1.5"/></svg>
<div class="a" style="left:970px;top:955px;width:25px;height:24px;background:#fff;border:1px solid #999"></div>
<div class="a" style="left:995px;top:955px;width:202px;height:24px;background:#fff;border:1px solid #999"></div>
<div class="a" style="left:1534px;top:955px;width:25px;height:24px;background:#fff;border:1px solid #999"></div>
<svg class="a" style="left:1542px;top:961px;" width="10" height="13" viewBox="0 0 10 13"><path d="M0 0 L9 6.5 L0 13Z" fill="#606060"/></svg>
<div class="a" style="left:2px;top:986px;width:1586px;height:32px;background:#f3f2f1"></div>
<div class="t" style="left:14px;top:995.00px;font-size:16px;color:#444;font-weight:400;"><span id="t42" class="sl" style="transform:scaleX(0.8973)">Ready</span></div>
<div class="t" style="left:110px;top:995.00px;font-size:16px;color:#444;font-weight:400;"><span id="t43" class="sl" style="transform:scaleX(0.9589)">Accessibility: Good to go</span></div>
<div class="a" style="left:1126px;top:986px;width:60px;height:32px;background:#d2d2d2"></div>
<div class="t" style="left:760px;width:800px;text-align:right;top:995.00px;font-size:16px;color:#444;font-weight:400;"><span id="t44" class="sr" >370%</span></div>
<svg class="a" style="left:135px;top:262px;" width="240" height="28" viewBox="135 262 240 28">
<path d="M143 273.5H150.5L146.75 277.5Z" fill="#555"/>
<circle cx="183" cy="267.3" r="1.3" fill="#999"/><circle cx="183" cy="273.8" r="1.3" fill="#999"/><circle cx="183" cy="280.3" r="1.3" fill="#999"/>
<path d="M226 266.5L241 281.5M241 266.5L226 281.5" stroke="#aaa" stroke-width="1.5"/>
<path d="M278.5 274.5L284 280.5L296.5 267" fill="none" stroke="#c8c8c8" stroke-width="3"/>
<text x="332" y="282" font-family="Liberation Serif" font-style="italic" font-weight="700" font-size="21" fill="#555" stroke="#555" stroke-width="0.4">f</text>
<text x="340.5" y="282" font-family="Liberation Serif" font-style="italic" font-weight="700" font-size="16" fill="#555" stroke="#555" stroke-width="0.4">x</text>
</svg>
<svg class="a" style="left:1555px;top:265px;" width="25" height="20" viewBox="1555 265 25 20"><path d="M1562.5 272.5L1567.5 277.5L1572.5 272.5" fill="none" stroke="#c0c0c0" stroke-width="2.2"/></svg>
<svg class="a" style="left:80px;top:988px;" width="30" height="28" viewBox="80 988 30 28"><g fill="none" stroke="#444" stroke-width="1.4" stroke-linecap="round" stroke-linejoin="round">
<circle cx="92.4" cy="994.9" r="2.6"/>
<path d="M90 996.6L86 994.6C84.6 994 83.5 995 83.7 996.5C83.9 997.8 85 998.5 88.5 999.7V1004.5L87 1009.5C86.6 1011.5 88.5 1012.8 90.4 1011.2"/>
<path d="M94.8 996.6L98.8 994.6C100.2 994 101.3 995 101.1 996.5C100.9 997.8 99.8 998.5 96.3 999.7V1003.9"/>
<path d="M93 1006.9L97.5 1011.6L105.3 1004"/>
</g></svg>
<svg class="a" style="left:1140px;top:988px;" width="370" height="28" viewBox="1140 988 370 28"><g fill="none" stroke="#444" stroke-width="1.4">
<rect x="1146.7" y="992.4" width="17.6" height="17.9"/>
<path d="M1152.6 992.4V1010.3M1158.5 992.4V1010.3M1146.7 998.4H1164.3M1146.7 1004.3H1164.3" />
<rect x="1206.4" y="992.4" width="19.4" height="18"/>
<rect x="1210" y="996" width="12.2" height="10.8"/>
<path d="M1212.5 999H1219.7M1212.5 1001.5H1219.7M1212.5 1004H1219.7" stroke-width="1.1"/>
<rect x="1266.2" y="992.4" width="19.6" height="17.8"/><path d="M1266.2 1002.6H1278.3V992.4M1272.3 992.4V1002.6"/>
</g>
<path d="M1314.5 1001.5H1325.4M1334.3 1001.5H1481.2M1407.6 997V1006M1490 1001.5H1501.3M1495.6 996V1007" stroke="#444" stroke-width="1.4"/>
<rect x="1468.2" y="993.2" width="7.4" height="16.3" fill="#666"/>
</svg>
<div class="a" style="left:670px;top:203px;width:779px;height:770px;background:#f0f0f0;border:1px solid #6f6f6f;box-shadow:0 2px 16px rgba(0,0,0,0.38)"></div>
<div class="a" style="left:671px;top:204px;width:777px;height:44px;background:#fff"></div>
<div class="t" style="left:682.6px;top:218.00px;font-size:18px;color:#000;font-weight:400;"><span id="t45" class="sl" style="transform:scaleX(0.9489)">Format Cells</span></div>
<svg class="a" style="left:1336px;top:215px;" width="16" height="22" viewBox="0 0 16 22"><path d="M3.6 5.6C3.8 3.6 5.4 2.4 7.4 2.4C9.6 2.4 11.2 3.9 11.2 5.8C11.2 7.4 10.4 8.3 9 9.2C7.8 10 7.3 10.8 7.3 12.3V14.3" fill="none" stroke="#222" stroke-width="1.3"/><circle cx="7.3" cy="17.6" r="1" fill="#222"/></svg>
<svg class="a" style="left:1404px;top:217px;" width="18" height="18" viewBox="0 0 18 18"><path d="M2 1L17 16M17 1L2 16" stroke="#111" stroke-width="1.1"/></svg>
<div class="a" style="left:681px;top:292px;width:755px;height:618px;background:#fff;border:1px solid #d9d9d9"></div>
<div class="a" style="left:773px;top:261px;width:469px;height:32px;background:#f0f0f0;border-top:1px solid #d9d9d9;border-right:1px solid #d9d9d9"></div>
<div class="a" style="left:773px;top:261px;width:1px;height:32px;background:#d9d9d9"></div>
<div class="t" style="left:422.5px;width:800px;text-align:center;top:271.00px;font-size:15.5px;color:#000;font-weight:400;"><span id="t46" class="sc" style="transform:scaleX(1.0386)">Alignment</span></div>
<div class="a" style="left:872px;top:261px;width:1px;height:32px;background:#d9d9d9"></div>
<div class="t" style="left:517.0px;width:800px;text-align:center;top:271.00px;font-size:15.5px;color:#000;font-weight:400;"><span id="t47" class="sc" style="transform:scaleX(0.9898)">Font</span></div>
<div class="a" style="left:962px;top:261px;width:1px;height:32px;background:#d9d9d9"></div>
<div class="t" style="left:607.0px;width:800px;text-align:center;top:271.00px;font-size:15.5px;color:#000;font-weight:400;"><span id="t48" class="sc" style="transform:scaleX(0.9886)">Border</span></div>
<div class="a" style="left:1052px;top:261px;width:1px;height:32px;background:#d9d9d9"></div>
<div class="t" style="left:697.0px;width:800px;text-align:center;top:271.00px;font-size:15.5px;color:#000;font-weight:400;"><span id="t49" class="sc" style="transform:scaleX(0.9287)">Fill</span></div>
<div class="a" style="left:1142px;top:261px;width:1px;height:32px;background:#d9d9d9"></div>
<div class="t" style="left:792.0px;width:800px;text-align:center;top:271.00px;font-size:15.5px;color:#000;font-weight:400;"><span id="t50" class="sc" >Protection</span></div>
<div class="a" style="left:683px;top:258px;width:90px;height:35px;background:#fff"></div>
<div class="t" style="left:697.5px;top:270.00px;font-size:15.5px;color:#000;font-weight:400;"><span id="t51" class="sl" style="transform:scaleX(1.0337)">Number</span></div>
<div class="t" style="left:696px;top:311.00px;font-size:15.5px;color:#000;font-weight:400;"><span id="t52" class="sl" style="transform:scaleX(0.9819)"><u>C</u>ategory:</span></div>
<div class="a" style="left:696px;top:334px;width:201px;height:424px;background:#fff;border:1px solid #828790"></div>
<div class="a" style="left:870px;top:335px;width:26px;height:422px;background:#f0f0f0"></div>
<svg class="a" style="left:876px;top:344px;" width="14" height="10" viewBox="0 0 14 10"><path d="M1.5 8.5L7 3L12.5 8.5" fill="none" stroke="#c4c4c4" stroke-width="2"/></svg>
<svg class="a" style="left:876px;top:738px;" width="14" height="10" viewBox="0 0 14 10"><path d="M1.5 1.5L7 7L12.5 1.5" fill="none" stroke="#c4c4c4" stroke-width="2"/></svg>
<div class="a" style="left:698px;top:441px;width:171px;height:21px;background:#0078d7"></div>
<div class="t" style="left:701.5px;top:340.00px;font-size:16px;color:#000;font-weight:400;"><span id="t53" class="sl" style="transform:scaleX(0.9650)">General</span></div>
<div class="t" style="left:701.5px;top:361.00px;font-size:16px;color:#000;font-weight:400;"><span id="t54" class="sl" style="transform:scaleX(0.9650)">Number</span></div>
<div class="t" style="left:701.5px;top:382.00px;font-size:16px;color:#000;font-weight:400;"><span id="t55" class="sl" style="transform:scaleX(0.9650)">Currency</span></div>
<div class="t" style="left:701.5px;top:403.00px;font-size:16px;color:#000;font-weight:400;"><span id="t56" class="sl" style="transform:scaleX(0.9650)">Accounting</span></div>
<div class="t" style="left:701.5px;top:424.00px;font-size:16px;color:#000;font-weight:400;"><span id="t57" class="sl" style="transform:scaleX(0.9650)">Date</span></div>
<div class="t" style="left:701.5px;top:445.00px;font-size:16px;color:#fff;font-weight:400;"><span id="t58" class="sl" style="transform:scaleX(0.9650)">Time</span></div>
<div class="t" style="left:701.5px;top:466.00px;font-size:16px;color:#000;font-weight:400;"><span id="t59" class="sl" style="transform:scaleX(0.9650)">Percentage</span></div>
<div class="t" style="left:701.5px;top:487.00px;font-size:16px;color:#000;font-weight:400;"><span id="t60" class="sl" style="transform:scaleX(0.9650)">Fraction</span></div>
<div class="t" style="left:701.5px;top:508.00px;font-size:16px;color:#000;font-weight:400;"><span id="t61" class="sl" style="transform:scaleX(0.9650)">Scientific</span></div>
<div class="t" style="left:701.5px;top:529.00px;font-size:16px;color:#000;font-weight:400;"><span id="t62" class="sl" style="transform:scaleX(0.9650)">Text</span></div>
<div class="t" style="left:701.5px;top:550.00px;font-size:16px;color:#000;font-weight:400;"><span id="t63" class="sl" style="transform:scaleX(0.9650)">Special</span></div>
<div class="t" style="left:701.5px;top:571.00px;font-size:16px;color:#000;font-weight:400;"><span id="t64" class="sl" style="transform:scaleX(0.9650)">Custom</span></div>
<div class="a" style="left:912px;top:344px;width:510px;height:52px;border:1px solid #dcdcdc"></div>
<div class="a" style="left:918px;top:338px;width:60px;height:12px;background:#fff"></div>
<div class="t" style="left:922px;top:338.00px;font-size:15.5px;color:#000;font-weight:400;"><span id="t65" class="sl" style="transform:scaleX(0.9817)">Sample</span></div>
<div class="t" style="left:928.3px;top:370.00px;font-size:15.5px;color:#000;font-weight:400;"><span id="t66" class="sl" style="transform:scaleX(0.9586)">1:12:00 PM</span></div>
<div class="t" style="left:912px;top:407.00px;font-size:15.5px;color:#000;font-weight:400;"><span id="t67" class="sl" style="transform:scaleX(0.9489)"><u>T</u>ype:</span></div>
<div class="a" style="left:910px;top:429px;width:511px;height:150px;background:#fff;border:1px solid #828790"></div>
<div class="a" style="left:1396px;top:431px;width:24px;height:147px;background:#f0f0f0"></div>
<div class="a" style="left:1396px;top:457px;width:24px;height:74px;background:#cdcdcd"></div>
<svg class="a" style="left:1402px;top:440px;" width="14" height="10" viewBox="0 0 14 10"><path d="M1.5 8.5L7 3L12.5 8.5" fill="none" stroke="#606060" stroke-width="2"/></svg>
<svg class="a" style="left:1402px;top:560px;" width="14" height="10" viewBox="0 0 14 10"><path d="M1.5 1.5L7 7L12.5 1.5" fill="none" stroke="#606060" stroke-width="2"/></svg>
<div class="a" style="left:914px;top:515px;width:481px;height:21px;background:#0078d7;outline:1px dotted #b06000;outline-offset:-1px"></div>
<div class="t" style="left:917.3px;top:435.00px;font-size:16px;color:#000;font-weight:400;"><span id="t68" class="sl" style="transform:scaleX(0.9650)">*1:30:55 PM</span></div>
<div class="t" style="left:917.3px;top:456.00px;font-size:16px;color:#000;font-weight:400;"><span id="t69" class="sl" style="transform:scaleX(0.9650)">13:30</span></div>
<div class="t" style="left:917.3px;top:477.00px;font-size:16px;color:#000;font-weight:400;"><span id="t70" class="sl" style="transform:scaleX(0.9650)">1:30 PM</span></div>
<div class="t" style="left:917.3px;top:498.00px;font-size:16px;color:#000;font-weight:400;"><span id="t71" class="sl" style="transform:scaleX(0.9650)">13:30:55</span></div>
<div class="t" style="left:917.3px;top:519.00px;font-size:16px;color:#fff;font-weight:400;"><span id="t72" class="sl" style="transform:scaleX(0.9650)">1:30:55 PM</span></div>
<div class="t" style="left:917.3px;top:540.00px;font-size:16px;color:#000;font-weight:400;"><span id="t73" class="sl" style="transform:scaleX(0.9650)">30:55.2</span></div>
<div class="t" style="left:917.3px;top:561.00px;font-size:16px;color:#000;font-weight:400;"><span id="t74" class="sl" style="transform:scaleX(0.9650)">37:30:55</span></div>
<div class="t" style="left:912px;top:588.00px;font-size:15.5px;color:#000;font-weight:400;"><span id="t75" class="sl" style="transform:scaleX(0.9860)"><u>L</u>ocale (location):</span></div>
<div class="a" style="left:912px;top:611px;width:511px;height:34px;background:#fff;border:1px solid #adadad"></div>
<div class="a" style="left:1395px;top:613px;width:26px;height:30px;background:#e1e1e1;border:1px solid #adadad"></div>
<svg class="a" style="left:1401px;top:622px;" width="14" height="10" viewBox="0 0 14 10"><path d="M1.5 1.5L7 7L12.5 1.5" fill="none" stroke="#333" stroke-width="1.2"/></svg>
<div class="t" style="left:917.2px;top:620.00px;font-size:15.5px;color:#000;font-weight:400;"><span id="t76" class="sl" style="transform:scaleX(0.9802)">English (United States)</span></div>
<div class="t" style="left:696px;top:793.00px;font-size:15.5px;color:#000;font-weight:400;"><span id="t77" class="sl" style="transform:scaleX(1.0071)">Time formats display date and time serial numbers as date values.&nbsp; Time formats that begin with an</span></div>
<div class="t" style="left:696px;top:815.00px;font-size:15.5px;color:#000;font-weight:400;"><span id="t78" class="sl" style="transform:scaleX(1.0090)">asterisk (*) respond to changes in regional date and time settings that are specified for the operating</span></div>
<div class="t" style="left:696px;top:836.00px;font-size:15.5px;color:#000;font-weight:400;"><span id="t79" class="sl" style="transform:scaleX(1.0035)">system. Formats without an asterisk are not affected by operating system settings.</span></div>
<div class="a" style="left:1173px;top:924px;width:124px;height:36px;background:#e1e1e1;border:2px solid #0078d7"></div>
<div class="t" style="left:834px;width:800px;text-align:center;top:935.00px;font-size:16px;color:#000;font-weight:400;"><span id="t80" class="sc" >OK</span></div>
<div class="a" style="left:1313px;top:924px;width:124px;height:36px;background:#e1e1e1;border:1px solid #adadad"></div>
<div class="t" style="left:974.5px;width:800px;text-align:center;top:935.00px;font-size:16px;color:#000;font-weight:400;"><span id="t81" class="sc" style="transform:scaleX(0.9034)">Cancel</span></div>
<div class="a" style="left:681px;top:257px;width:95px;height:39px;border:4.5px solid #000;border-radius:4px"></div>
<div class="a" style="left:905px;top:424px;width:521px;height:161px;border:5px solid #000;border-radius:4px"></div>
<div class="a" style="left:1166px;top:916px;width:139px;height:53px;border:5.5px solid #000;border-radius:5px"></div>
<div class="t" style="left:190.7px;top:836.00px;font-size:37px;color:#000;font-weight:700;"><span id="t82" class="sl" style="transform:scaleX(1.0815)">Select time type</span></div>
<div class="t" style="left:788.2px;top:921.00px;font-size:35px;color:#000;font-weight:700;"><span id="t83" class="sl" style="transform:scaleX(1.0117)">OK Button</span></div>
<svg class="a" style="left:0px;top:0px;pointer-events:none" width="1590" height="1020" viewBox="0 0 1590 1020">
<g stroke="#000" fill="none">
<path d="M684 291 L696 429" stroke-width="4.6"/>
<path d="M496 843.5 L884 596" stroke-width="5"/>
<path d="M978 940.3 L1142 940.3" stroke-width="5.1"/>
</g>
<g fill="#000">
<path d="M687.5 420.5 L696 428 L702.5 420.5 L696.7 444.5 Z"/>
<path d="M905.1 585.1 L875.3 592.2 L882.4 596.5 L885.3 608.6 Z"/>
<path d="M1165.5 940.3 L1135.7 930.9 L1140.6 940.3 L1135.7 950.3 Z"/>
</g></svg>
</body></html>
